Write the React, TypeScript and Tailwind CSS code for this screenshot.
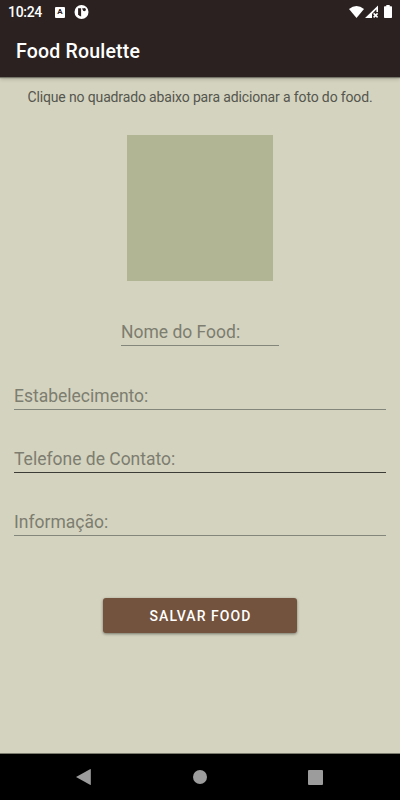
import clsx from 'clsx'

interface FieldProps {
  label: string
  className?: string
  lineClass?: string
}

const FIELDS = [
  { label: 'Estabelecimento:', line: 'border-[#83867a]' },
  { label: 'Telefone de Contato:', line: 'border-[#3c3c37]' },
  { label: 'Informação:', line: 'border-[#83867a]' },
]

function StatusBar() {
  return (
    <div className="flex h-6 items-center justify-between pl-2 pr-[7px] text-white">
      <div className="flex items-center">
        <span className="w-[47px] text-[14px] font-medium leading-6 tracking-[-0.3px]">10:24</span>
        <span className="flex h-[11px] w-[10px] items-center justify-center rounded-[1px] bg-white text-[8px] font-bold leading-none text-[#2a2120]">
          A
        </span>
        <svg className="ml-[9px]" width="15" height="14" viewBox="0 0 15 14">
          <circle cx="7.5" cy="7" r="7" fill="#fff" />
          <path d="M4.1 3.2h3v8.2q-2-.4-3-2z" fill="#2a2120" />
          <path d="M8.3 3.2h1v1h-1z" fill="#2a2120" />
          <circle cx="10.3" cy="4.6" r="1.6" fill="#2a2120" />
        </svg>
      </div>
      <svg width="46" height="14" viewBox="0 0 46 14" fill="#fff">
        <path d="M2 3.9Q9.5-1.9 17 3.9L9.5 13z" />
        <path d="M31 .5V7h-1.6V4.3L25 9v4h-7z" />
        <path d="m26.6 8.4 4 4M30.6 8.4l-4 4" stroke="#fff" strokeWidth="1.5" />
        <path d="M39.3 1.2V0h3.4v1.2h1.6q.7 0 .7.7v10.4q0 .7-.7.7h-6.6q-.7 0-.7-.7V1.9q0-.7.7-.7z" />
      </svg>
    </div>
  )
}

function Field({ label, className, lineClass }: FieldProps) {
  return (
    <div className={clsx('flex h-[35px] items-start border-b', className, lineClass)}>
      <span className="text-[17.5px] leading-[42px] text-[#7d7d70]">{label}</span>
    </div>
  )
}

function NavigationBar() {
  return (
    <nav className="flex h-[46px] items-center justify-between bg-black pl-[76px] pr-[77px] shadow-[0_-1px_0_#7b7b6e]">
      <svg width="15" height="16" viewBox="0 0 15 16" fill="#9c9c9c">
        <path d="M0 8 14 .2q.8-.4.8.4v14.8q0 .8-.8.4z" />
      </svg>
      <span className="h-[14px] w-[14px] rounded-full bg-[#9c9c9c]" />
      <span className="h-[15px] w-[15px] rounded-[1px] bg-[#9c9c9c]" />
    </nav>
  )
}

export default function App() {
  return (
    <div className="flex h-[800px] w-[400px] flex-col bg-[#d4d3bf] font-[Roboto,sans-serif]">
      <header className="h-[77px] bg-[#2a2120] shadow-[0_1px_1px_#77766b,0_2px_4px_rgba(0,0,0,0.2)]">
        <StatusBar />
        <h1 className="pl-4 text-[19.5px] font-medium leading-[56px] tracking-[0.2px] text-white">Food Roulette</h1>
      </header>

      <main className="flex flex-1 flex-col items-center">
        <p className="mt-[10px] whitespace-nowrap text-[14px] leading-5 tracking-[-0.14px] text-[#55564e]">
          Clique no quadrado abaixo para adicionar a foto do food.
        </p>

        {/* Photo picker */}
        <div className="mt-7 h-[146px] w-[146px] shrink-0 bg-[#b1b594]" />

        <Field label="Nome do Food:" className="mt-[30px] w-[158px]" lineClass="border-[#83867a]" />

        <div className="mt-[29px] flex w-[372px] flex-col gap-7">
          {FIELDS.map((field) => (
            <Field key={field.label} label={field.label} lineClass={field.line} />
          ))}
        </div>

        <button className="mt-[62px] h-[35px] w-[194px] rounded-[3px] bg-[#73523e] pl-px pt-[2px] text-[14px] font-medium tracking-[1.05px] text-white shadow-[0_1px_3px_rgba(0,0,0,0.45)]">
          SALVAR FOOD
        </button>
      </main>

      <NavigationBar />
    </div>
  )
}
